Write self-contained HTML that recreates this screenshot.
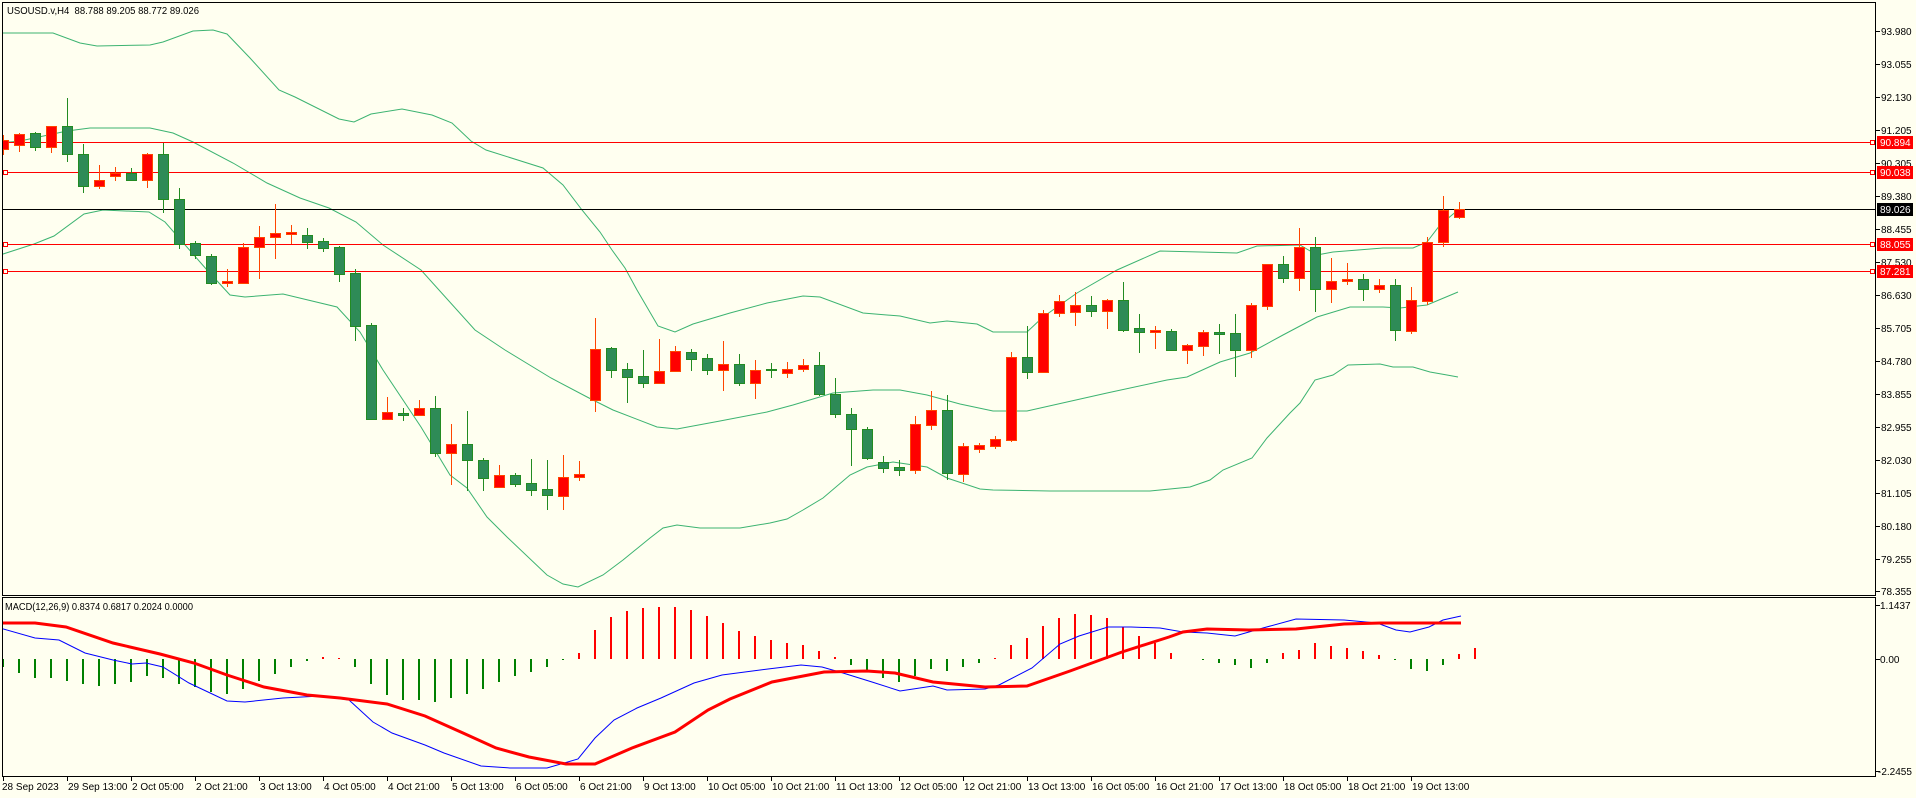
<!DOCTYPE html>
<html><head><meta charset="utf-8"><style>
html,body{margin:0;padding:0;background:#FFFFF0;width:1916px;height:798px;overflow:hidden}
svg{display:block}
text{font-family:"Liberation Sans",sans-serif;font-size:10px;fill:#000}
</style></head><body>
<svg width="1916" height="798" viewBox="0 0 1916 798" xmlns="http://www.w3.org/2000/svg">
<rect x="0" y="0" width="1916" height="798" fill="#FFFFF0"/>
<defs>
<clipPath id="cm"><rect x="2.5" y="2.5" width="1873" height="593"/></clipPath>
<clipPath id="cd"><rect x="2.5" y="598" width="1873" height="178"/></clipPath>
</defs>
<g clip-path="url(#cm)">
<g fill="none" stroke="#3CB371" stroke-width="1">
<polyline points="0,33 53,33 80,43 97,46 150,45 163,42 193,31 213,30 227,34 250,58 279,90 295,97 339,119 354,122 371,114 402,109 432,115 452,123 471,141 486,150 543,168 563,185 582,210 600,232 612,250 625,268 637,290 658,326 675,332 693,324 730,313 767,303 803,296 820,297 863,313 900,316 930,323 947,321 977,324 993,332 1027,332 1043,317 1077,293 1117,270 1160,251 1200,252 1237,253 1257,246 1300,245 1317,255 1333,252 1383,248 1413,248 1427,242 1440,225 1458,210"/>
<polyline points="0,143 20,141 67,131 90,128 150,128 173,133 193,142 233,163 267,183 300,198 329,208 356,222 383,245 421,270 475,330 505,350 551,378 589,398 613,410 657,427 677,429 720,421 767,412 793,405 833,393 873,390 900,390 927,395 960,404 993,411 1027,411 1107,393 1167,380 1187,377 1220,362 1250,353 1283,335 1317,317 1350,307 1383,307 1400,308 1427,305 1458,292"/>
<polyline points="0,255 34,244 54,236 84,214 103,210 149,212 165,222 207,270 230,295 245,297 283,294 337,307 360,332 383,370 421,427 450,475 467,488 487,517 507,537 547,575 563,584 578,587 603,575 623,560 650,538 663,528 677,525 700,528 740,528 770,523 787,519 803,510 823,498 850,475 867,467 893,462 927,467 947,478 980,489 993,490 1050,491 1150,491 1190,487 1210,480 1223,470 1252,458 1267,438 1290,413 1300,403 1315,380 1333,375 1348,365 1380,364 1393,367 1413,367 1430,372 1447,375 1458,377"/>
</g>
<g stroke="#FF0000" stroke-width="1">
<path d="M0 142.5H1876M0 172.5H1876M0 244.5H1876M0 271.5H1876"/>
</g>
<path d="M0 209.5H1876" stroke="#000" stroke-width="1"/>
<g fill="#FFFFF0" stroke="#FF0000" stroke-width="1">
<rect x="3.5" y="140.5" width="4" height="4"/><rect x="3.5" y="170.5" width="4" height="4"/><rect x="3.5" y="242.5" width="4" height="4"/><rect x="3.5" y="269.5" width="4" height="4"/>
<rect x="1870.5" y="140.5" width="4" height="4"/><rect x="1870.5" y="170.5" width="4" height="4"/><rect x="1870.5" y="242.5" width="4" height="4"/><rect x="1870.5" y="269.5" width="4" height="4"/>
</g>
<path fill="none" stroke="#FF4500" stroke-width="1" d="M3.5 135V155M19.5 133V152M51.5 126V153M99.5 165V189M115.5 167V181M147.5 153V188M227.5 269V287M243.5 243V283M259.5 226V279M275.5 204V259M291.5 225V244M387.5 397V420M419.5 400V416M451.5 424V485M499.5 465V487M563.5 455V510M579.5 461V481M595.5 318V412M659.5 339V383M675.5 346V371M723.5 341V391M755.5 360V399M787.5 362V378M803.5 359V372M915.5 416V474M931.5 391V430M963.5 443V482M979.5 443V453M995.5 436V449M1011.5 352V442M1043.5 310V373M1059.5 295V317M1075.5 292V326M1107.5 299V329M1155.5 326V349M1187.5 344V364M1203.5 330V356M1251.5 303V358M1267.5 264V310M1299.5 228V291M1331.5 258V303M1347.5 263V285M1379.5 279V293M1411.5 287V334M1427.5 237V305M1443.5 196V247M1459.5 202V219"/>
<path fill="none" stroke="#228B22" stroke-width="1" d="M35.5 132V151M67.5 98V162M83.5 144V193M131.5 168V180M163.5 143V213M179.5 188V249M195.5 241V259M211.5 254V285M307.5 228V249M323.5 238V252M339.5 246V282M355.5 269V341M371.5 323V419M403.5 408V421M435.5 396V457M467.5 411V491M483.5 458V491M515.5 473V487M531.5 459V496M547.5 460V510M611.5 347V378M627.5 363V403M643.5 350V388M691.5 349V371M707.5 354V375M739.5 354V386M771.5 363V378M819.5 352V396M835.5 378V418M851.5 408V466M867.5 427V460M883.5 456V473M899.5 460V476M947.5 395V480M1027.5 326V379M1091.5 296V317M1123.5 282V332M1139.5 314V353M1171.5 329V351M1219.5 324V354M1235.5 314V377M1283.5 256V283M1315.5 237V312M1363.5 274V301M1395.5 279V341"/>
<g fill="#FF0000" stroke="#FF4500" stroke-width="1">
<rect x="-1.5" y="140.5" width="10" height="9"/>
<rect x="14.5" y="134.5" width="10" height="11"/>
<rect x="46.5" y="126.5" width="10" height="21"/>
<rect x="94.5" y="180.5" width="10" height="6"/>
<rect x="110.5" y="173.5" width="10" height="3"/>
<rect x="142.5" y="154.5" width="10" height="26"/>
<rect x="222.5" y="281.5" width="10" height="2"/>
<rect x="238.5" y="247.5" width="10" height="36"/>
<rect x="254.5" y="237.5" width="10" height="10"/>
<rect x="270.5" y="233.5" width="10" height="4"/>
<rect x="286.5" y="232.5" width="10" height="2"/>
<rect x="382.5" y="412.5" width="10" height="7"/>
<rect x="414.5" y="408.5" width="10" height="7"/>
<rect x="446.5" y="444.5" width="10" height="9"/>
<rect x="494.5" y="475.5" width="10" height="12"/>
<rect x="558.5" y="477.5" width="10" height="19"/>
<rect x="574.5" y="474.5" width="10" height="3"/>
<rect x="590.5" y="349.5" width="10" height="51"/>
<rect x="654.5" y="371.5" width="10" height="12"/>
<rect x="670.5" y="351.5" width="10" height="20"/>
<rect x="718.5" y="364.5" width="10" height="6"/>
<rect x="750.5" y="370.5" width="10" height="13"/>
<rect x="782.5" y="369.5" width="10" height="4"/>
<rect x="798.5" y="365.5" width="10" height="4"/>
<rect x="910.5" y="424.5" width="10" height="46"/>
<rect x="926.5" y="410.5" width="10" height="15"/>
<rect x="958.5" y="446.5" width="10" height="28"/>
<rect x="974.5" y="445.5" width="10" height="4"/>
<rect x="990.5" y="439.5" width="10" height="7"/>
<rect x="1006.5" y="357.5" width="10" height="83"/>
<rect x="1038.5" y="313.5" width="10" height="59"/>
<rect x="1054.5" y="301.5" width="10" height="12"/>
<rect x="1070.5" y="305.5" width="10" height="7"/>
<rect x="1102.5" y="300.5" width="10" height="11"/>
<rect x="1150.5" y="330.5" width="10" height="2"/>
<rect x="1182.5" y="345.5" width="10" height="5"/>
<rect x="1198.5" y="332.5" width="10" height="14"/>
<rect x="1246.5" y="305.5" width="10" height="45"/>
<rect x="1262.5" y="264.5" width="10" height="42"/>
<rect x="1294.5" y="247.5" width="10" height="31"/>
<rect x="1326.5" y="281.5" width="10" height="8"/>
<rect x="1342.5" y="279.5" width="10" height="2"/>
<rect x="1374.5" y="285.5" width="10" height="4"/>
<rect x="1406.5" y="300.5" width="10" height="31"/>
<rect x="1422.5" y="242.5" width="10" height="59"/>
<rect x="1438.5" y="210.5" width="10" height="32"/>
<rect x="1454.5" y="209.5" width="10" height="8"/>
</g>
<g fill="#2E8B57" stroke="#228B22" stroke-width="1">
<rect x="30.5" y="133.5" width="10" height="14"/>
<rect x="62.5" y="126.5" width="10" height="28"/>
<rect x="78.5" y="154.5" width="10" height="32"/>
<rect x="126.5" y="173.5" width="10" height="7"/>
<rect x="158.5" y="154.5" width="10" height="45"/>
<rect x="174.5" y="199.5" width="10" height="45"/>
<rect x="190.5" y="243.5" width="10" height="12"/>
<rect x="206.5" y="256.5" width="10" height="27"/>
<rect x="302.5" y="235.5" width="10" height="7"/>
<rect x="318.5" y="241.5" width="10" height="7"/>
<rect x="334.5" y="247.5" width="10" height="27"/>
<rect x="350.5" y="273.5" width="10" height="53"/>
<rect x="366.5" y="325.5" width="10" height="94"/>
<rect x="398.5" y="413.5" width="10" height="2"/>
<rect x="430.5" y="408.5" width="10" height="45"/>
<rect x="462.5" y="444.5" width="10" height="16"/>
<rect x="478.5" y="460.5" width="10" height="18"/>
<rect x="510.5" y="475.5" width="10" height="9"/>
<rect x="526.5" y="483.5" width="10" height="7"/>
<rect x="542.5" y="489.5" width="10" height="6"/>
<rect x="606.5" y="348.5" width="10" height="22"/>
<rect x="622.5" y="369.5" width="10" height="8"/>
<rect x="638.5" y="376.5" width="10" height="7"/>
<rect x="686.5" y="352.5" width="10" height="7"/>
<rect x="702.5" y="358.5" width="10" height="12"/>
<rect x="734.5" y="364.5" width="10" height="19"/>
<rect x="766.5" y="369.5" width="10" height="1"/>
<rect x="814.5" y="365.5" width="10" height="29"/>
<rect x="830.5" y="394.5" width="10" height="20"/>
<rect x="846.5" y="414.5" width="10" height="15"/>
<rect x="862.5" y="429.5" width="10" height="29"/>
<rect x="878.5" y="462.5" width="10" height="6"/>
<rect x="894.5" y="467.5" width="10" height="3"/>
<rect x="942.5" y="410.5" width="10" height="63"/>
<rect x="1022.5" y="357.5" width="10" height="15"/>
<rect x="1086.5" y="305.5" width="10" height="6"/>
<rect x="1118.5" y="300.5" width="10" height="30"/>
<rect x="1134.5" y="328.5" width="10" height="4"/>
<rect x="1166.5" y="331.5" width="10" height="19"/>
<rect x="1214.5" y="332.5" width="10" height="2"/>
<rect x="1230.5" y="333.5" width="10" height="17"/>
<rect x="1278.5" y="264.5" width="10" height="14"/>
<rect x="1310.5" y="247.5" width="10" height="42"/>
<rect x="1358.5" y="279.5" width="10" height="10"/>
<rect x="1390.5" y="285.5" width="10" height="45"/>
</g>
</g>
<g clip-path="url(#cd)">
<path fill="none" stroke="#008000" stroke-width="2" d="M3 659v8M19 659v14M35 659v19M51 659v19M67 659v22M83 659v25M99 659v27M115 659v25M131 659v23M147 659v17M163 659v19M179 659v25M195 659v28M211 659v33M227 659v35M243 659v30M259 659v22M275 659v15M291 659v8M307 659v2M355 659v8M371 659v25M387 659v36M403 659v41M419 659v41M435 659v43M451 659v39M467 659v35M483 659v30M499 659v23M515 659v17M531 659v13M547 659v8M563 659v1M851 659v6M867 659v13M883 659v19M899 659v23M915 659v17M931 659v10M947 659v12M963 659v8M979 659v4M1203 659v1M1219 659v4M1235 659v6M1251 659v9M1267 659v4M1395 659v1M1411 659v10M1427 659v12M1443 659v6"/>
<path fill="none" stroke="#FF0000" stroke-width="2" d="M323 659v-2M339 659v-1M579 659v-6M595 659v-29M611 659v-42M627 659v-48M643 659v-51M659 659v-52M675 659v-52M691 659v-49M707 659v-43M723 659v-36M739 659v-28M755 659v-23M771 659v-19M787 659v-16M803 659v-14M819 659v-8M835 659v-2M995 659v-1M1011 659v-14M1027 659v-21M1043 659v-33M1059 659v-41M1075 659v-45M1091 659v-44M1107 659v-41M1123 659v-32M1139 659v-23M1155 659v-16M1171 659v-6M1283 659v-6M1299 659v-9M1315 659v-16M1331 659v-13M1347 659v-11M1363 659v-8M1379 659v-4M1459 659v-5M1475 659v-11"/>
<polyline fill="none" stroke="#0000FF" stroke-width="1" points="0,628 35,638 59,640 85,653 113,660 132,664 146,663 163,667 189,683 227,701 245,702 283,698 321,696 349,700 373,722 392,733 425,745 444,753 481,766 510,768 547,768 578,759 595,738 614,720 637,708 661,698 694,683 722,675 768,669 801,665 822,667 843,673 872,682 900,691 933,686 947,690 985,689 999,685 1032,668 1060,644 1079,636 1108,627 1131,627 1160,628 1183,632 1207,633 1235,636 1263,628 1296,619 1344,620 1377,623 1396,630 1410,632 1429,627 1443,620 1461,616"/>
<polyline fill="none" stroke="#FF0000" stroke-width="3" points="0,623 35,623 66,627 113,643 160,654 194,663 227,675 264,687 307,695 340,698 387,704 425,716 463,733 496,748 529,757 566,764 595,764 632,748 675,732 708,710 730,699 772,682 824,672 867,671 895,673 933,682 985,687 1027,686 1070,671 1122,652 1169,637 1183,632 1207,629 1249,630 1296,629 1344,624 1381,623 1461,623"/>
</g>
<g fill="none" stroke="#000" stroke-width="1">
<rect x="2.5" y="2.5" width="1873" height="593"/>
<rect x="2.5" y="597.5" width="1873" height="179"/>
</g>
<path stroke="#000" stroke-width="1" d="M1876 31.5h4M1876 64.5h4M1876 97.5h4M1876 130.5h4M1876 163.5h4M1876 196.5h4M1876 229.5h4M1876 262.5h4M1876 295.5h4M1876 328.5h4M1876 361.5h4M1876 394.5h4M1876 427.5h4M1876 460.5h4M1876 493.5h4M1876 526.5h4M1876 559.5h4M1876 591.5h4M1876 605.5h4M1876 659.5h4M1876 771.5h4"/>
<g>
<text x="1881" y="35">93.980</text>
<text x="1881" y="68">93.055</text>
<text x="1881" y="101">92.130</text>
<text x="1881" y="134">91.205</text>
<text x="1881" y="167">90.305</text>
<text x="1881" y="200">89.380</text>
<text x="1881" y="233">88.455</text>
<text x="1881" y="266">87.530</text>
<text x="1881" y="299">86.630</text>
<text x="1881" y="332">85.705</text>
<text x="1881" y="365">84.780</text>
<text x="1881" y="398">83.855</text>
<text x="1881" y="431">82.955</text>
<text x="1881" y="464">82.030</text>
<text x="1881" y="497">81.105</text>
<text x="1881" y="530">80.180</text>
<text x="1881" y="563">79.255</text>
<text x="1881" y="595">78.355</text>
<text x="1880" y="609">1.1437</text>
<text x="1880" y="663">0.00</text>
<text x="1878" y="775">-2.2455</text>
</g>
<rect x="1877" y="136" width="36" height="13" fill="#FF0000"/>
<rect x="1877" y="166" width="36" height="13" fill="#FF0000"/>
<rect x="1877" y="203" width="36" height="13" fill="#000"/>
<rect x="1877" y="238" width="36" height="13" fill="#FF0000"/>
<rect x="1877" y="265" width="36" height="13" fill="#FF0000"/>
<text x="1880" y="146" style="fill:#fff">90.894</text>
<text x="1880" y="176" style="fill:#fff">90.038</text>
<text x="1880" y="213" style="fill:#fff">89.026</text>
<text x="1880" y="248" style="fill:#fff">88.055</text>
<text x="1880" y="275" style="fill:#fff">87.281</text>
<text x="7" y="14" textLength="192" lengthAdjust="spacingAndGlyphs" xml:space="preserve">USOUSD.v,H4  88.788 89.205 88.772 89.026</text>
<text x="5" y="610" textLength="188" lengthAdjust="spacingAndGlyphs">MACD(12,26,9) 0.8374 0.6817 0.2024 0.0000</text>
<path stroke="#000" stroke-width="1" d="M3.5 777v4M67.5 777v4M131.5 777v4M195.5 777v4M259.5 777v4M323.5 777v4M387.5 777v4M451.5 777v4M515.5 777v4M579.5 777v4M643.5 777v4M707.5 777v4M771.5 777v4M835.5 777v4M899.5 777v4M963.5 777v4M1027.5 777v4M1091.5 777v4M1155.5 777v4M1219.5 777v4M1283.5 777v4M1347.5 777v4M1411.5 777v4"/>
<g>
<text x="2" y="790">28 Sep 2023</text>
<text x="68" y="790">29 Sep 13:00</text>
<text x="132" y="790">2 Oct 05:00</text>
<text x="196" y="790">2 Oct 21:00</text>
<text x="260" y="790">3 Oct 13:00</text>
<text x="324" y="790">4 Oct 05:00</text>
<text x="388" y="790">4 Oct 21:00</text>
<text x="452" y="790">5 Oct 13:00</text>
<text x="516" y="790">6 Oct 05:00</text>
<text x="580" y="790">6 Oct 21:00</text>
<text x="644" y="790">9 Oct 13:00</text>
<text x="708" y="790">10 Oct 05:00</text>
<text x="772" y="790">10 Oct 21:00</text>
<text x="836" y="790">11 Oct 13:00</text>
<text x="900" y="790">12 Oct 05:00</text>
<text x="964" y="790">12 Oct 21:00</text>
<text x="1028" y="790">13 Oct 13:00</text>
<text x="1092" y="790">16 Oct 05:00</text>
<text x="1156" y="790">16 Oct 21:00</text>
<text x="1220" y="790">17 Oct 13:00</text>
<text x="1284" y="790">18 Oct 05:00</text>
<text x="1348" y="790">18 Oct 21:00</text>
<text x="1412" y="790">19 Oct 13:00</text>
</g>
</svg>
</body></html>
